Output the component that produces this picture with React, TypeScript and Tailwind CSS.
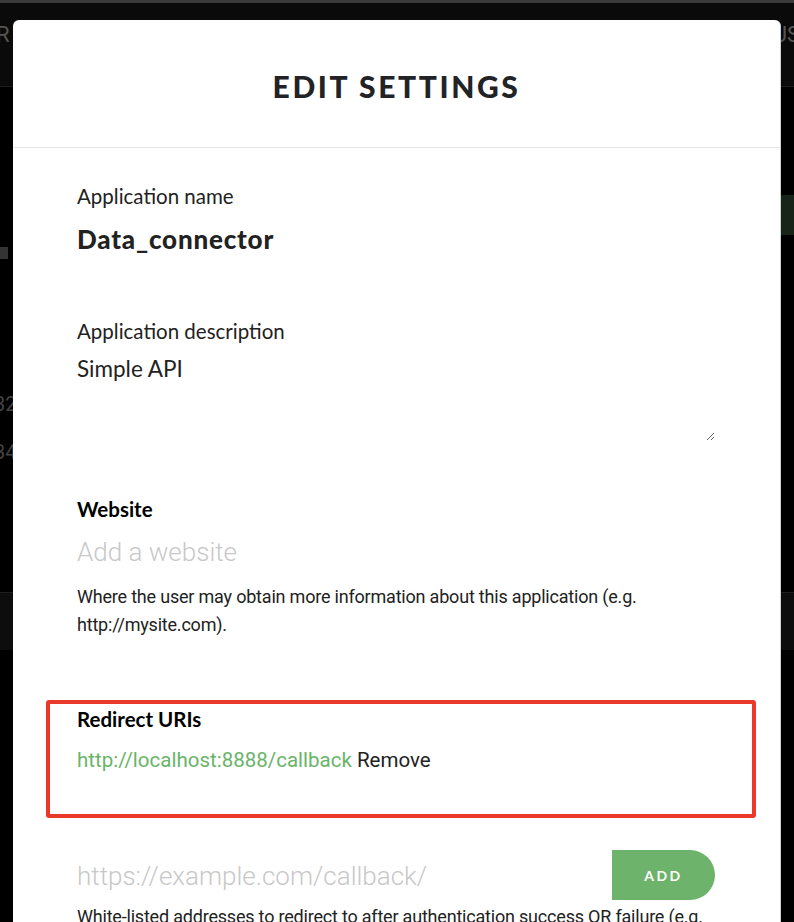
import React from "react";

const circ = { fontFamily: "Lato, 'Open Sans', sans-serif" };
const helv = { fontFamily: "Roboto, 'Liberation Sans', sans-serif" };

export default function App() {
  return (
    <div className="relative w-[794px] h-[922px] overflow-hidden bg-black">
      {/* background page */}
      <div className="flex flex-col w-full h-full" style={helv}>
        <div className="h-[3px] bg-[#3a3a3a]" />
        <div className="h-[84px] bg-[#0a0a0a] border-b border-[#1c1c1c] flex items-center justify-between pb-[20px]">
          <span className="-ml-[4px] text-[22px] text-[#555]">R</span>
          <span className="-mr-[6px] text-[22px] text-[#555]">US</span>
        </div>
        <div className="flex flex-1 justify-between">
          <div className="flex flex-col w-[13px]">
            <div className="mt-[160px] w-[8px] h-[12px] bg-[#333]" />
            <span className="mt-[130px] -ml-[6px] text-[20px] text-[#444]">32</span>
            <span className="mt-[18px] -ml-[6px] text-[20px] text-[#444]">34</span>
          </div>
          <div className="flex flex-col w-[13px]">
            <div className="mt-[108px] h-[40px] bg-[#182418]" />
          </div>
        </div>
        <div className="h-[58px] bg-[#0d0d0d] border-t border-[#1f1f1f]" />
        <div className="h-[272px]" />
      </div>

      {/* modal */}
      <div className="absolute left-[13px] top-[20px] w-[768px] h-[920px] bg-white rounded-t-[6px] border-r border-[#d0d0d0]">
        <div className="h-[128px] flex items-center justify-center pt-[6px] border-b border-[#e6e6e6]">
          <h1 className="text-[30px] font-black tracking-[2.6px] text-[#222326]" style={circ}>
            EDIT SETTINGS
          </h1>
        </div>
        <div className="pl-[64px] pr-[65px] flex flex-col">
          <div className="mt-[36px] text-[20.5px] leading-[24px] text-[#222]" style={circ}>Application name</div>
          <div className="mt-[16px] text-[26px] leading-[30px] font-black tracking-[0.8px] text-[#222]" style={circ}>Data_connector</div>
          <div className="mt-[65px] text-[20.5px] leading-[24px] text-[#222]" style={circ}>Application description</div>
          <textarea
            readOnly
            defaultValue="Simple API"
            className="mt-[12px] h-[86px] w-full resize-y border-0 p-0 outline-none text-[22.5px] leading-[28px] text-[#222] bg-white"
            style={circ}
          />
          <div className="mt-[56px] text-[20.5px] leading-[24px] font-bold text-black" style={circ}>Website</div>
          <div className="mt-[15px] text-[26px] leading-[32px] font-light text-[#c8c8c8]" style={helv}>Add a website</div>
          <div className="mt-[15px] text-[18px] leading-[28px] text-[#222] tracking-[-0.2px]" style={helv}>
            Where the user may obtain more information about this application (e.g.
            <br />
            http://mysite.com).
          </div>
          <div className="mt-[61px] -ml-[31px] w-[710px] border-[4px] border-[#e8392b] rounded-[3px] pl-[27px] pt-[3px] pb-[42px]">
            <div className="text-[20.5px] leading-[24px] font-bold text-black" style={circ}>Redirect URIs</div>
            <div className="mt-[17px] text-[20.5px] leading-[24px]" style={helv}>
              <span className="text-[#6ab46a]">http://localhost:8888/callback</span>{" "}
              <span className="text-[#222]">Remove</span>
            </div>
          </div>
          <div className="mt-[32px] flex items-center justify-between h-[50px]">
            <span className="text-[26px] font-light text-[#c8c8c8] pt-[2px]" style={helv}>https://example.com/callback/</span>
            <button className="w-[103px] h-[50px] bg-[#6db36b] rounded-r-full text-white text-[14px] font-bold tracking-[2.5px]" style={circ}>
              ADD
            </button>
          </div>
          <div className="mt-[3px] text-[18px] leading-[28px] text-[#222] tracking-[-0.2px] whitespace-nowrap" style={helv}>
            White-listed addresses to redirect to after authentication success OR failure (e.g.
          </div>
        </div>
      </div>
    </div>
  );
}
